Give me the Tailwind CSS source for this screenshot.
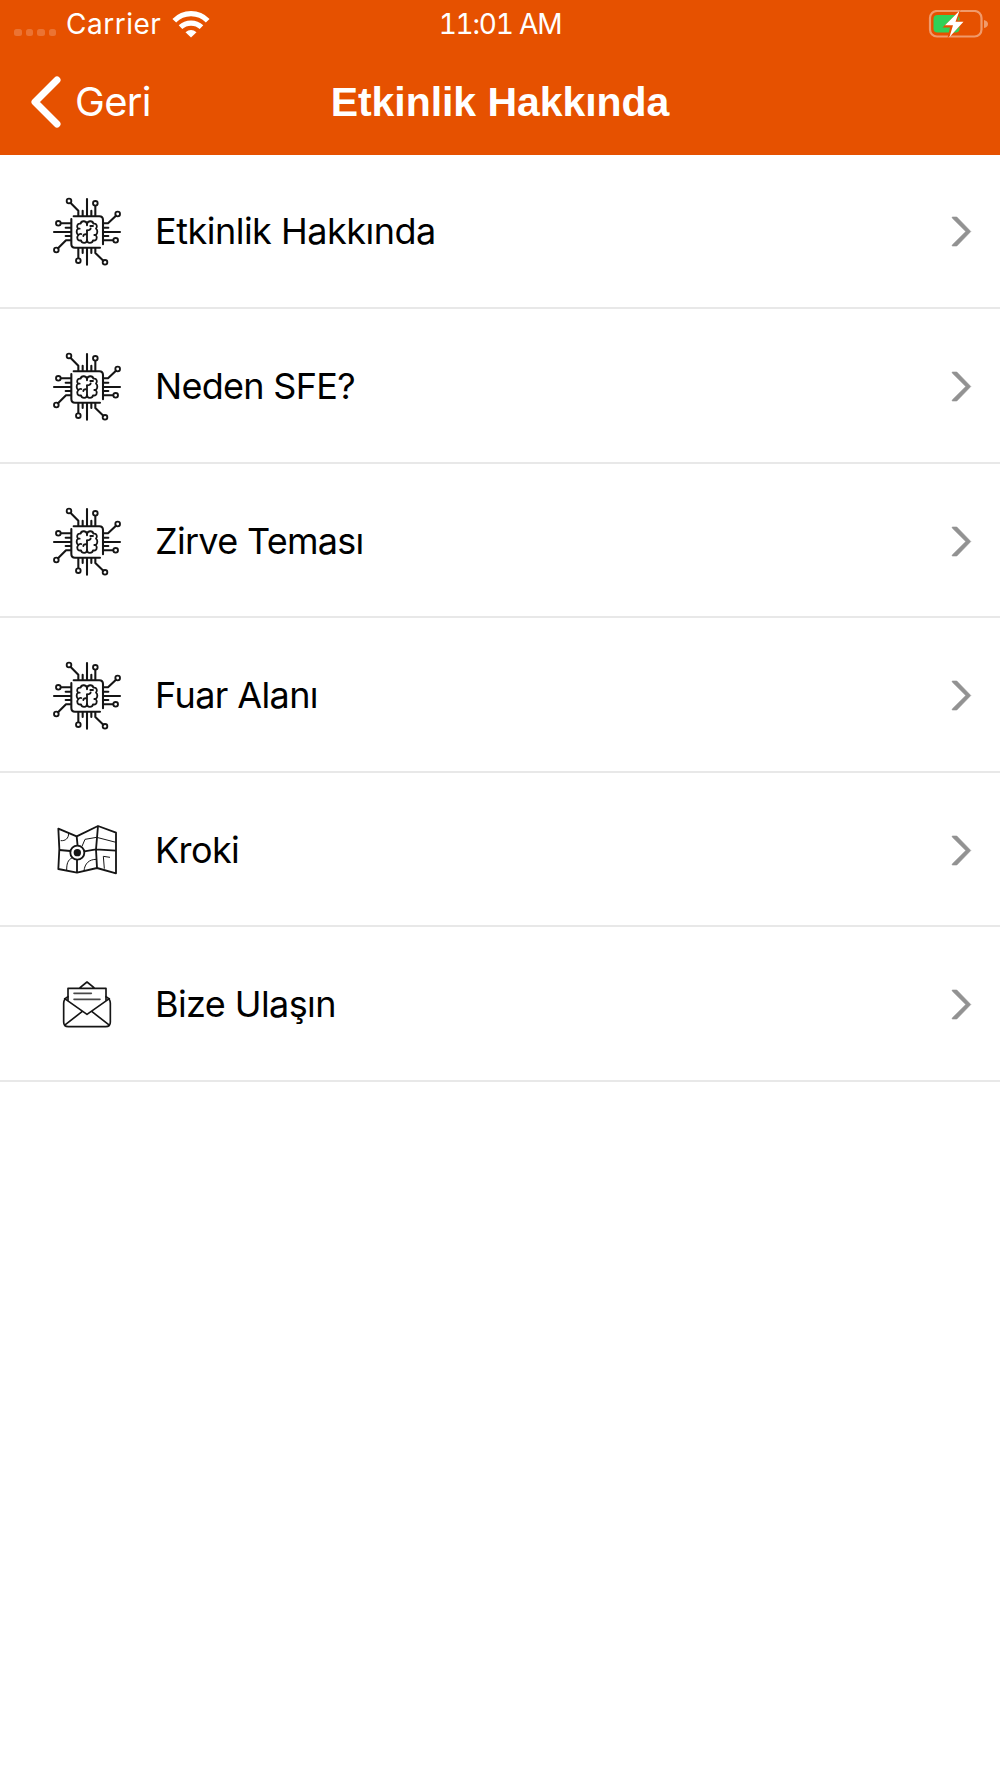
<!DOCTYPE html>
<html lang="tr">
<head>
<meta charset="utf-8">
<title>Etkinlik Hakkında</title>
<script src="https://cdn.jsdelivr.net/npm/@tailwindcss/browser@4"></script>
</head>
<body class="bg-white font-['Inter',sans-serif] text-black">
<svg class="hidden">
  <symbol id="chip" viewBox="0 3 270 270">
    <g fill="none" stroke="#151515" stroke-width="6.2" stroke-linecap="round" stroke-linejoin="round">
      <path d="M101 94H178Q189 94 189 105V178M180 188H105Q94 188 94 177V102"/>
      <path d="M141 42V92M141 190V239M42 141H92M191 141H240"/>
      <path d="M128 77V92M154 77V92M128 190V204M154 190V204M77 128H92M77 153H92M191 128H205M191 153H205"/>
      <path d="M115 92V77L92 54M166 92V63M115 190V219M166 190V204L190 227M92 115H63M92 166H78L54 190M191 115H204L228 92M191 166H219"/>
      <g stroke-width="5.5"><circle cx="87" cy="48" r="7"/><circle cx="166" cy="55" r="7"/><circle cx="233" cy="87" r="7"/><circle cx="227" cy="166" r="7"/><circle cx="195" cy="232" r="7"/><circle cx="115" cy="227" r="7"/><circle cx="49" cy="195" r="7"/><circle cx="55" cy="115" r="7"/></g>
      <g stroke-width="5.5">
        <path d="M141 121V118C141 107 124 105 122 116C111 114 109 126 114 131C108 136 109 146 115 150C108 158 113 169 123 166C125 176 141 176 141 165V136"/>
        <path d="M141 118C141 107 158 105 160 116C171 114 173 126 168 131C174 136 173 146 167 150C174 158 169 169 159 166C157 176 141 176 141 165"/>
        <path d="M141 136Q151 136 152 130M151 123H159M115 150Q119 145 124 147M139 148Q130 147 130 153M116 131H119M163 150H167"/>
      </g>
    </g>
  </symbol>
  <symbol id="map" viewBox="0 0 270 270">
    <g fill="none" stroke="#151515" stroke-width="5.5" stroke-linejoin="round">
      <path d="M55 71L110 94L174 63L228 83V205L171 189L111 203L55 192L58 132Z"/>
      <path d="M110 94L113 124M111 164V203M174 63L168 133L171 189M58 135L91 138M133 139L168 133L228 137"/>
      <circle cx="112" cy="143" r="21" fill="#fff"/>
      <circle cx="112" cy="143" r="11" fill="#151515" stroke="none"/>
      <g stroke-width="3"><path d="M62 107C76 108 86 101 86 84M126 124L135 103L170 97L228 112M97 158C83 165 80 176 80 196M132 198C134 175 148 163 169 163M193 191L190 154L210 157"/></g>
    </g>
  </symbol>
  <symbol id="mail" viewBox="0 -4 270 270">
    <g fill="none" stroke="#151515" stroke-width="5" stroke-linejoin="round" stroke-linecap="round">
      <path d="M120 82L141 65L162 82M84 120V84H198V120"/>
      <path d="M84 109Q71 115 71 129V185Q71 199 85 199H197Q211 199 211 185V129Q211 115 198 109"/>
      <path d="M74 115L141 162L208 115M76 193L126 154M206 193L156 154"/>
      <path stroke="#484848" d="M102 99H154M102 117H180"/>
    </g>
  </symbol>
  <symbol id="next" viewBox="0 0 22 32"><path d="M1.2 2H5.8L19.8 16.5L5.8 31H1.2V30L14.8 16.5L1.2 3Z" fill="#929292" stroke="#929292" stroke-width=".6"/></symbol>
</svg>

<header class="h-[155px] bg-[#e65100] text-white">
  <div class="grid h-12 grid-cols-3 items-center">
    <div class="flex items-center pl-[14px]">
      <div class="flex gap-1 pt-[17px]">
        <i class="size-[7.5px] rounded-[2.5px] bg-white/20"></i><i class="size-[7.5px] rounded-[2.5px] bg-white/20"></i><i class="size-[7.5px] rounded-[2.5px] bg-white/20"></i><i class="size-[7.5px] rounded-[2.5px] bg-white/20"></i>
      </div>
      <span class="ml-[10px] text-[28px] leading-none tracking-[0.5px]">Carrier</span>
      <svg class="ml-[11px] h-[28px] w-[38px]" viewBox="0 0 38 28" fill="none" stroke="#fff" stroke-width="5.2">
        <path d="M2.3 10.8C11.5 1.3 26.5 1.3 35.7 10.8"/><path d="M8.5 17.1C14.3 11.7 23.7 11.7 29.5 17.1"/>
        <path d="M13.5 22.2Q19 17.8 24.5 22.2L19 27.5Z" fill="#fff" stroke="none"/>
      </svg>
    </div>
    <span class="text-center text-[28px] leading-none tracking-[-1.2px] tabular-nums">11:01 AM</span>
    <svg class="mr-3 h-[28px] w-[60px] justify-self-end" viewBox="0 0 60 28">
      <rect x="2" y="1" width="51.5" height="25.5" rx="7" fill="none" stroke="#fff" stroke-opacity=".42" stroke-width="2.2"/>
      <path d="M56 10Q60 11 60 14Q60 17 56 18Z" fill="#fff" fill-opacity=".42"/>
      <rect x="5.5" y="5" width="26" height="17.5" rx="4" fill="#30d158"/>
      <path d="M32.5 0L14.5 17.5H22L19.5 28L38 10.5H29.5Z" fill="#e65100"/>
      <path d="M31.5 .8L17 15.2H25L21.5 27L35.5 11.7H27.5Z" fill="#fff"/>
    </svg>
  </div>
  <div class="grid h-[107px] grid-cols-[1fr_auto_1fr] items-center pl-[30px]">
    <a class="flex items-center">
      <svg class="h-[52px] w-[32px]" viewBox="0 0 32 52"><path d="M27 4L5 26L27 48" fill="none" stroke="#fff" stroke-width="7" stroke-linecap="round" stroke-linejoin="round"/></svg>
      <span class="ml-[13px] text-[40px] leading-none tracking-[-0.7px]">Geri</span>
    </a>
    <h1 class="-ml-[30px] pt-[2px] font-['Liberation_Sans',sans-serif] text-[41px] leading-none font-bold tracking-[-0.05px]">Etkinlik Hakkında</h1>
    <span></span>
  </div>
</header>

<ul class="-mt-[0.6px] text-[36px] leading-none tracking-[-0.6px]">
  <li class="flex h-[154.6px] items-center border-b-2 border-[#e8e8e8] pt-[1.4px] pr-[27px] pl-10"><svg class="size-[90px]"><use href="#chip"/></svg><span class="ml-[25px] flex-1 tracking-[-0.5px]">Etkinlik Hakkında</span><svg class="h-8 w-[22px]"><use href="#next"/></svg></li>
  <li class="flex h-[154.6px] items-center border-b-2 border-[#e8e8e8] pt-[1.4px] pr-[27px] pl-10"><svg class="size-[90px]"><use href="#chip"/></svg><span class="ml-[25px] flex-1 tracking-[-0.7px]">Neden SFE?</span><svg class="h-8 w-[22px]"><use href="#next"/></svg></li>
  <li class="flex h-[154.6px] items-center border-b-2 border-[#e8e8e8] pt-[1.4px] pr-[27px] pl-10"><svg class="size-[90px]"><use href="#chip"/></svg><span class="ml-[25px] flex-1 tracking-[-0.7px]">Zirve Teması</span><svg class="h-8 w-[22px]"><use href="#next"/></svg></li>
  <li class="flex h-[154.6px] items-center border-b-2 border-[#e8e8e8] pt-[1.4px] pr-[27px] pl-10"><svg class="size-[90px]"><use href="#chip"/></svg><span class="ml-[25px] flex-1">Fuar Alanı</span><svg class="h-8 w-[22px]"><use href="#next"/></svg></li>
  <li class="flex h-[154.6px] items-center border-b-2 border-[#e8e8e8] pt-[1.4px] pr-[27px] pl-10"><svg class="size-[90px]"><use href="#map"/></svg><span class="ml-[25px] flex-1">Kroki</span><svg class="h-8 w-[22px]"><use href="#next"/></svg></li>
  <li class="flex h-[154.6px] items-center border-b-2 border-[#e8e8e8] pt-[1.4px] pr-[27px] pl-10"><svg class="size-[90px]"><use href="#mail"/></svg><span class="ml-[25px] flex-1">Bize Ulaşın</span><svg class="h-8 w-[22px]"><use href="#next"/></svg></li>
</ul>
</body>
</html>
